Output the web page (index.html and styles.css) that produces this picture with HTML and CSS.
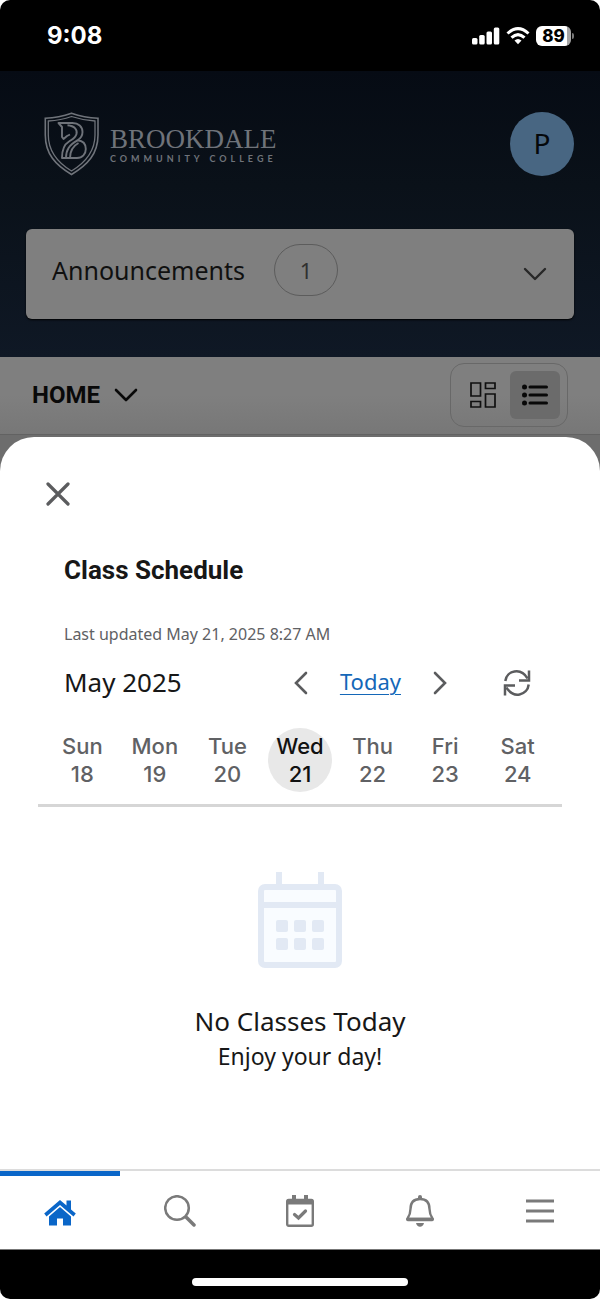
FILE: index.html
```html
<!DOCTYPE html>
<html lang="en">
<head>
<meta charset="utf-8">
<meta name="viewport" content="width=device-width, initial-scale=1">
<title>Class Schedule</title>
<link rel="stylesheet" href="styles.css">
</head>
<body>
<div class="phone">
  <div class="status">
    <span class="clock">9:08</span>
    <div class="indicators">
      <svg width="28" height="18" viewBox="0 0 28 18" fill="#fff" aria-hidden="true"><rect x="0" y="11" width="5.500" height="6.500" rx="1.500"/><rect x="7.200" y="8" width="5.500" height="9.500" rx="1.500"/><rect x="14.500" y="4.500" width="5.500" height="13" rx="1.500"/><rect x="21.800" y="0.500" width="5.500" height="17" rx="1.500"/></svg>
      <svg width="24" height="18" viewBox="0 0 24 18" fill="none" stroke="#fff" stroke-width="3" aria-hidden="true"><path d="M1.500 6.500Q12-3.200 22.500 6.500M5.500 10.700Q12 4.600 18.500 10.700"/><path d="M8.500 13.500Q12 10.300 15.500 13.500L12 17.200Z" fill="#fff" stroke="none"/></svg>
      <div class="battery"><span class="charge">89</span><span class="tip"></span></div>
    </div>
  </div>

  <header class="masthead">
    <div class="brand-row">
      <a class="brand" href="#">
        <svg width="56" height="64" viewBox="0 0 56 64" fill="none" stroke="#6f737a" aria-hidden="true">
          <path stroke-width="1.600" d="M1.300 6.300Q15 5.500 27.500 1.200Q40 5.500 54 6.300V23C54 42 43.500 53 27.500 62.500C11.500 53 1.300 42 1.300 23Z"/>
          <path stroke-width="1.300" d="M4.300 9Q17 8.200 27.500 4.500Q38.500 8.200 51 9V23C51 40 41.500 50.500 27.500 59C13.500 50.500 4.300 40 4.300 23Z"/>
          <g stroke-width="1.900" stroke-linejoin="round">
            <path d="M23.500 13.300C31 14 33.500 18 32.500 22C31.500 26 28 27.500 25 29.500C20 32.500 18 38 18 46H33C38.500 46 41.800 42 41.800 37C41.800 32 38.500 28.800 33.500 28.300C36.500 26.500 38.500 23.500 38.500 20C38.500 14.500 34.500 11 28.500 11H14.500L18 15V25L19.500 27L23 24L26 22.500"/>
            <path d="M22 46C22 38 25 33 33.500 28.300M26 46C26 38.500 29 34 34.500 31"/>
          </g>
        </svg>
        <span class="wordmark"><span class="college">BROOKDALE</span><span class="college-type">COMMUNITY COLLEGE</span></span>
      </a>
      <button class="avatar" type="button" aria-label="Profile">P</button>
    </div>
    <button class="announcements" type="button">
      <span>Announcements</span>
      <span class="count">1</span>
      <svg class="push" width="26" height="16" viewBox="0 0 26 16" fill="none" stroke="#282828" stroke-width="2.400" stroke-linecap="round" stroke-linejoin="round" aria-hidden="true"><path d="M3 3L13 13L23 3"/></svg>
    </button>
  </header>

  <div class="toolbar">
    <button class="page-menu" type="button">HOME
      <svg width="26" height="16" viewBox="0 0 26 16" fill="none" stroke="#090909" stroke-width="2.600" stroke-linecap="round" stroke-linejoin="round" aria-hidden="true"><path d="M3 3L13 13L23 3"/></svg>
    </button>
    <div class="views">
      <button type="button" aria-label="Card view"><svg width="26" height="26" viewBox="0 0 26 26" fill="none" stroke="#101010" stroke-width="1.700" aria-hidden="true"><path d="M1 1H10.500V14H1ZM15.500 1H25V6.500H15.500ZM15.500 12H25V25H15.500ZM1 19.500H10.500V25H1Z"/></svg></button>
      <button class="selected" type="button" aria-label="List view"><svg width="26" height="22" viewBox="0 0 26 22" fill="#080808" stroke="#080808" stroke-linecap="round" aria-hidden="true"><g stroke="none"><circle cx="2.500" cy="3" r="2.500"/><circle cx="2.500" cy="11" r="2.500"/><circle cx="2.500" cy="19" r="2.500"/></g><path stroke-width="3" d="M8 3H24.500M8 11H24.500M8 19H24.500"/></svg></button>
    </div>
  </div>

  <div class="backdrop">
    <main class="sheet">
      <button class="close" type="button" aria-label="Close"><svg width="24" height="24" viewBox="0 0 24 24" fill="none" stroke="#5b5c5e" stroke-width="3.200" stroke-linecap="round" aria-hidden="true"><path d="M2 2L22 22M22 2L2 22"/></svg></button>
      <h1>Class Schedule</h1>
      <p class="updated">Last updated May 21, 2025 8:27 AM</p>
      <div class="month-row">
        <h2>May 2025</h2>
        <div class="pager">
          <button type="button" aria-label="Previous week"><svg width="14" height="24" viewBox="0 0 14 24" fill="none" stroke="#5b5c5e" stroke-width="2.600" stroke-linecap="round" aria-hidden="true"><path d="M12 2L2 12L12 22"/></svg></button>
          <a href="#">Today</a>
          <button type="button" aria-label="Next week"><svg width="14" height="24" viewBox="0 0 14 24" fill="none" stroke="#5b5c5e" stroke-width="2.600" stroke-linecap="round" aria-hidden="true"><path d="M2 2L12 12L2 22"/></svg></button>
        </div>
        <button type="button" aria-label="Refresh"><svg width="28" height="28" viewBox="0 0 28 28" fill="none" stroke="#5b5c5e" stroke-width="2.500" aria-hidden="true"><path d="M2.300 12C3.500 1.500 18-2 24.500 9.500M26 1.500V11.500H16M25.700 15.500C24.500 26.500 10 30 3.500 18.500M2 26.500V16.500H12"/></svg></button>
      </div>
      <div class="week">
        <button type="button">Sun<br>18</button>
        <button type="button">Mon<br>19</button>
        <button type="button">Tue<br>20</button>
        <button class="current" type="button">Wed<br>21</button>
        <button type="button">Thu<br>22</button>
        <button type="button">Fri<br>23</button>
        <button type="button">Sat<br>24</button>
      </div>
      <section class="empty">
        <svg width="84" height="96" viewBox="0 0 84 96" aria-hidden="true"><g fill="none" stroke="#e2e9f4"><rect x="3" y="15" width="78" height="78" rx="4" fill="#f9fcff" stroke-width="6"/><path stroke-width="6" d="M3 33H81M21 0V15M63 0V15"/></g><g fill="#e2e9f4"><rect x="18" y="48" width="12" height="12" rx="2"/><rect x="36" y="48" width="12" height="12" rx="2"/><rect x="54" y="48" width="12" height="12" rx="2"/><rect x="18" y="66" width="12" height="12" rx="2"/><rect x="36" y="66" width="12" height="12" rx="2"/><rect x="54" y="66" width="12" height="12" rx="2"/></g></svg>
        <p class="headline">No Classes Today</p>
        <p class="note">Enjoy your day!</p>
      </section>
    </main>
  </div>

  <nav class="tabs" aria-label="Main">
    <a class="active" href="#" aria-label="Home"><svg width="32" height="32" viewBox="0 0 32 32" fill="#0a66c8" aria-hidden="true"><path d="M16 5L22.500 10.500V5.500H27V14.500L31.800 18.500L29.500 21.500L16 10L2.500 21.500L.200 18.500Z"/><path d="M16 12L27 21.500V30.500H19V23.500H13V30.500H5V21.500Z"/></svg></a>
    <a href="#" aria-label="Search"><svg width="32" height="32" viewBox="0 0 32 32" fill="none" stroke="#7a7a7a" stroke-linecap="round" aria-hidden="true"><circle cx="13" cy="13" r="11.800" stroke-width="2.500"/><path stroke-width="3.500" d="M22.500 22.500L30 30"/></svg></a>
    <a href="#" aria-label="Calendar"><svg width="32" height="32" viewBox="0 0 32 32" fill="none" stroke="#7a7a7a" aria-hidden="true"><rect x="3.200" y="5" width="25.600" height="25.800" rx="1.500" stroke-width="2.400"/><path stroke-width="5" d="M3 7H29"/><path stroke-width="4" d="M10 0V5M22 0V5"/><path stroke-width="3.200" stroke-linecap="round" d="M10.500 19.500L14.500 23L21.500 16"/></svg></a>
    <a href="#" aria-label="Notifications"><svg width="32" height="32" viewBox="0 0 32 32" fill="none" stroke="#7a7a7a" stroke-width="2.400" stroke-linejoin="round" aria-hidden="true"><path d="M16 4C9 4 6.500 8.500 6.500 14C6.500 19 5 21.500 3.300 24H28.700C27 21.500 25.500 19 25.500 14C25.500 8.500 23 4 16 4Z"/><path stroke-width="3.500" stroke-linecap="round" d="M3.800 24.500H28.200"/><path stroke-width="4" stroke-linecap="round" d="M16 2V3"/><path d="M12 28H20Q19 31.800 16 31.800T12 28Z" fill="#7a7a7a" stroke="none"/></svg></a>
    <a href="#" aria-label="Menu"><svg width="32" height="32" viewBox="0 0 32 32" stroke="#7a7a7a" stroke-width="3.200" aria-hidden="true"><path d="M2 6H30M2 16H30M2 26H30"/></svg></a>
  </nav>
  <div class="home-area"><span class="home-indicator"></span></div>
</div>
</body>
</html>
```
FILE: styles.css
```css
* { box-sizing: border-box; }
body { margin: 0; background: #fff; font-family: "Noto Sans", sans-serif; color: #171717; }
h1, h2, p { margin: 0; }
button { padding: 0; border: 0; background: none; font: inherit; color: inherit; }
svg { display: block; flex: none; }

.phone { display: flex; flex-direction: column; min-height: 100vh; border-radius: 10px; overflow: hidden; background: #000; }

.status { display: flex; align-items: center; justify-content: space-between; height: 71px; padding: 0 26px 0 47px; color: #fff; font-family: Inter, sans-serif; }
.clock { font-size: 24px; font-weight: 700; }
.indicators { display: flex; align-items: center; gap: 6px; }
.battery { display: flex; align-items: center; gap: 1px; }
.charge { width: 35px; border-radius: 6px; background: linear-gradient(90deg, #fff 88%, #a5a5a5 88%); color: #000; font-size: 17px; line-height: 20px; font-weight: 800; text-align: center; }
.tip { width: 2px; height: 6px; border-radius: 0 2px 2px 0; background: #777; }

.masthead { display: flex; flex-direction: column; gap: 53px; padding: 41px 26px 38px; background: linear-gradient(#060b14, #0a1119 40%, #0f1825); }
.brand-row { display: flex; align-items: center; justify-content: space-between; height: 64px; padding-left: 18px; }
.brand { display: flex; align-items: center; gap: 10px; color: #6f737a; text-decoration: none; }
.wordmark { display: flex; flex-direction: column; }
.college { font: 27px/30px "Liberation Serif", serif; }
.college-type { font: 700 9px/10px Lato, sans-serif; letter-spacing: 4px; }
.avatar { width: 64px; height: 64px; padding-bottom: 2px; border-radius: 50%; background: #486682; color: #05080b; font-size: 28px; }
.announcements { display: flex; align-items: center; gap: 29px; height: 90px; padding: 0 26px 8px; border-radius: 6px; background: #7f7f7f; color: #101010; font-size: 25px; box-shadow: 0 1px 2px #000; }
.count { width: 64px; border: 1px solid #5c5c5c; border-radius: 26px; color: #303030; font-size: 22px; line-height: 50px; text-align: center; }
.push { margin: 8px 0 0 auto; }

.toolbar { display: flex; align-items: center; justify-content: space-between; height: 78px; padding: 0 32px 2px; border-bottom: 1px solid #626262; background: linear-gradient(#7f7f7f 50%, #777); }
.page-menu { display: flex; align-items: center; gap: 13px; color: #090909; font: 700 24px/32px Roboto, sans-serif; }
.views { display: flex; gap: 2px; padding: 7px; border: 1px solid #686868; border-radius: 14px; }
.views button { display: grid; place-items: center; width: 50px; height: 48px; border-radius: 6px; }
.views .selected { background: #6b6b6b; }

.backdrop { display: flex; flex: 1; padding-top: 2px; background: #6d6d6d; }
.sheet { flex: 1; padding: 45px 38px 0; border-radius: 34px 34px 0 0; background: #fff; }
.close { display: block; margin-left: 8px; }
h1 { margin: 48px 26px 0; font: 700 26px/32px Roboto, sans-serif; }
.updated { margin: 36px 26px 0; color: #606164; font-size: 16px; line-height: 24px; }
.month-row { display: flex; align-items: center; height: 32px; margin: 21px 31px 0 26px; }
h2 { padding-bottom: 2px; font-size: 26px; line-height: 32px; font-weight: 400; }
.pager { display: flex; align-items: center; gap: 32px; margin: 0 56px 0 auto; }
.pager a { padding-bottom: 4px; color: #1467b8; font-size: 22px; line-height: 30px; text-decoration-thickness: 1px; text-underline-offset: 4px; }
.week { display: grid; grid-template-columns: repeat(7, 1fr); justify-items: center; padding: 29px 8px 12px; border-bottom: 3px solid #d6d6d6; }
.week button { width: 64px; height: 64px; border-radius: 50%; color: #606164; font: 500 22px/28px Inter, sans-serif; }
.week .current { background: #e8e8e8; color: #111; }
.empty { display: flex; flex-direction: column; align-items: center; padding: 65px 0 32px; }
.headline { margin-top: 35px; font-size: 26px; line-height: 36px; }
.note { font-size: 23px; line-height: 34px; }

.tabs { display: grid; grid-template-columns: repeat(5, 1fr); height: 81px; border-top: 2px solid #dcdcdc; border-bottom: 1px solid #777; background: #fff; }
.tabs a { display: grid; place-items: center; border-top: 5px solid transparent; padding-bottom: 4px; }
.tabs .active { border-color: #0a66c8; }
.home-area { display: flex; justify-content: center; align-items: flex-end; height: 49px; padding-bottom: 13px; }
.home-indicator { width: 36%; height: 8px; border-radius: 4px; background: #fff; }
```
